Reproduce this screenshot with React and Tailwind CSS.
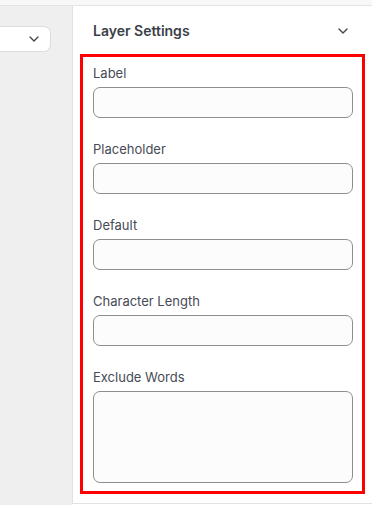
import { ChevronDown } from "lucide-react";

const fields = [
  { label: "Label" },
  { label: "Placeholder" },
  { label: "Default" },
  { label: "Character Length" },
  { label: "Exclude Words", multiline: true },
];

function Field({ label, multiline }) {
  return (
    <div className="flex flex-col gap-1">
      <label className="text-[13px] leading-5 text-[#464b56]">{label}</label>
      {multiline ? (
        <textarea className="h-[92px] w-[260px] resize-none rounded-[7px] border border-[#8e8e8e] bg-[#fcfcfc]" />
      ) : (
        <input className="h-[31px] w-[260px] rounded-[7px] border border-[#8e8e8e] bg-[#fcfcfc]" />
      )}
    </div>
  );
}

export default function App() {
  return (
    <div className="flex h-[505px] w-[372px] flex-col overflow-hidden bg-white font-['Inter',sans-serif]">
      <div className="h-[6px] shrink-0 border-b border-[#e4e4e4] bg-[#f8f8f8]" />
      <div className="flex flex-1">
        {/* left canvas column */}
        <div className="w-[72px] shrink-0 bg-[#efefef] pt-5">
          <div className="flex h-[26px] w-[51px] items-center justify-end rounded-r-[7px] border border-l-0 border-[#dcdcdc] bg-white pr-[8px]">
            <ChevronDown size={16} strokeWidth={2} className="text-[#444]" />
          </div>
        </div>

        {/* settings panel */}
        <div className="flex h-[498px] w-[300px] flex-col border-b border-l border-[#e2e2e2] bg-white">
          <div className="flex h-[48px] items-center justify-between pl-[20px] pr-[21px]">
            <span className="text-[14px] font-semibold text-[#3b3f48]">
              Layer Settings
            </span>
            <ChevronDown size={16} strokeWidth={2} className="mt-[1px] text-[#444]" />
          </div>
          <div className="ml-[7px] flex h-[440px] w-[285px] flex-col gap-[21px] border-[3px] border-[#ff0000] pb-2 pl-[10px] pt-[6px]">
            {fields.map((f) => (
              <Field key={f.label} {...f} />
            ))}
          </div>
        </div>
      </div>
    </div>
  );
}
